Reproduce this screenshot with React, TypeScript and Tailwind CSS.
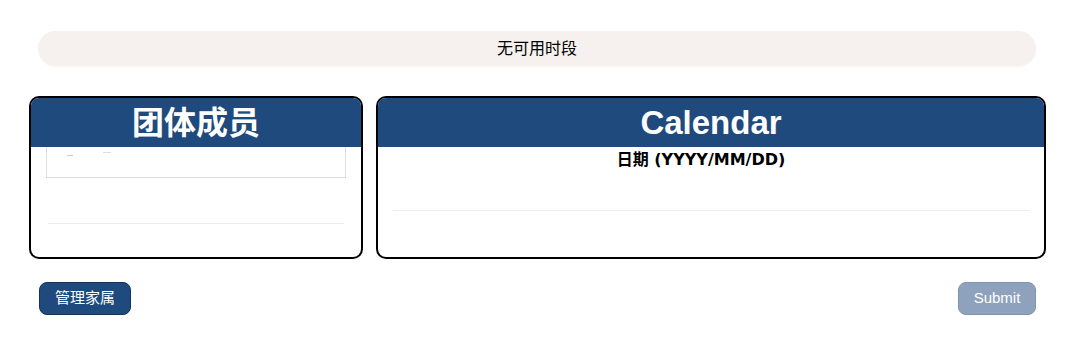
export default function App() {
  return (
    <div className="w-[1080px] h-[343px] bg-white font-['Liberation_Sans','Noto_Sans_CJK_SC',sans-serif] text-black">
      <div className="pt-[31px] px-[38px] pr-[44px]">
        <div className="h-[35px] rounded-full bg-[#f6f1ef] flex items-center justify-center text-[16px] shadow-[0_1px_2px_rgba(0,0,0,0.04)]">
          无可用时段
        </div>
      </div>

      <div className="flex gap-[13px] pl-[29px] pr-[34px] mt-[30px]">
        <section className="w-[334px] h-[163px] border-2 border-black rounded-[10px] overflow-hidden flex flex-col">
          <div className="h-[49px] bg-[#1f4a7d] flex items-center justify-center text-white text-[32px] font-bold">
            团体成员
          </div>
          <div className="px-[15px]">
            <div className="h-[31px] border border-[#dcdcdc] border-t-0 relative">
              <span className="absolute left-[20px] top-[8px] w-[6px] h-px bg-[#ccc]" />
              <span className="absolute left-[56px] top-[5px] w-[8px] h-px bg-[#ddd]" />
            </div>
            <div className="mt-[45px] mx-[2px] border-t border-[#ececec]" />
          </div>
        </section>

        <section className="flex-1 h-[163px] border-2 border-black rounded-[10px] overflow-hidden flex flex-col">
          <div className="h-[49px] bg-[#1f4a7d] flex items-center justify-center text-white text-[33px] font-bold">
            Calendar
          </div>
          <div className="px-[15px]">
            <div className="text-center pr-[20px] text-[16px] font-bold font-['DejaVu_Sans','Noto_Sans_CJK_SC',sans-serif] leading-[25px]">
              日期 (YYYY/MM/DD)
            </div>
            <div className="mt-[38px] border-t border-[#ececec]" />
          </div>
        </section>
      </div>

      <div className="flex justify-between pl-[39px] pr-[44px] mt-[23px]">
        <button className="h-[33px] px-[15px] rounded-[8px] bg-[#1f4a7d] border border-[#14325a] text-white text-[15px]">
          管理家属
        </button>
        <button className="h-[33px] w-[78px] rounded-[8px] bg-[#8ea2bd] border border-[#7f93ae] text-white text-[15px]">
          Submit
        </button>
      </div>
    </div>
  );
}
